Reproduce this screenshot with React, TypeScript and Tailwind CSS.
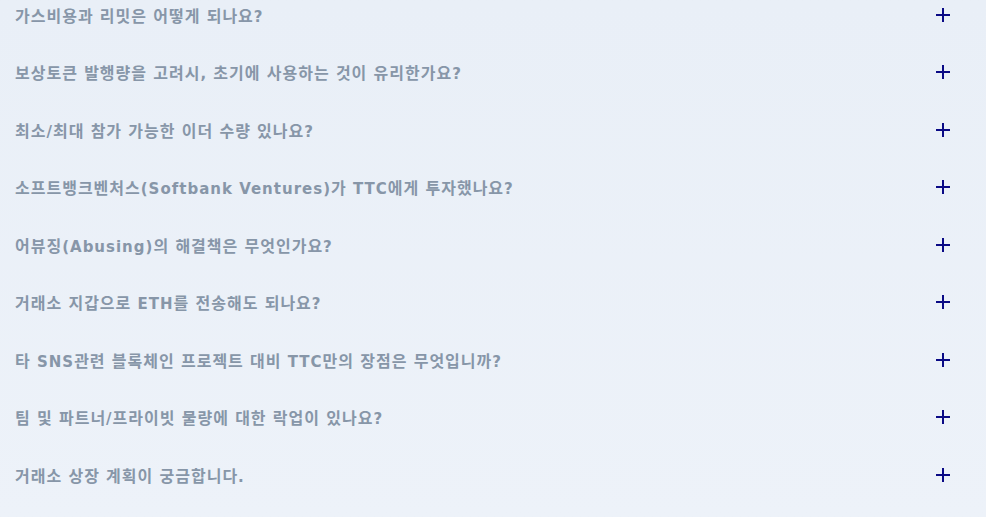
import React from "react";

const items = [
  "가스비용과 리밋은 어떻게 되나요?",
  "보상토큰 발행량을 고려시, 초기에 사용하는 것이 유리한가요?",
  "최소/최대 참가 가능한 이더 수량 있나요?",
  "소프트뱅크벤처스(Softbank Ventures)가 TTC에게 투자했나요?",
  "어뷰징(Abusing)의 해결책은 무엇인가요?",
  "거래소 지갑으로 ETH를 전송해도 되나요?",
  "타 SNS관련 블록체인 프로젝트 대비 TTC만의 장점은 무엇입니까?",
  "팀 및 파트너/프라이빗 물량에 대한 락업이 있나요?",
  "거래소 상장 계획이 궁금합니다.",
];

function Label({ text }: { text: string }) {
  const parts = text.split(/([\uAC00-\uD7A3]+)/);
  return (
    <span
      className="flex-1 text-[15px] leading-[20px] font-bold text-[#8796a8] tracking-[1px]"
      style={{ fontFamily: '"DejaVu Sans", "Noto Sans CJK KR", sans-serif' }}
    >
      {parts.map((p, i) =>
        /[\uAC00-\uD7A3]/.test(p) ? (
          <span key={i} className="text-[16px]">
            {p}
          </span>
        ) : (
          <span key={i}>{p}</span>
        )
      )}
    </span>
  );
}

export default function App() {
  return (
    <div className="w-[986px] h-[517px] overflow-hidden bg-gradient-to-b from-[#e9eff7] to-[#edf2f9]">
      <div className="-mt-[12px] flex flex-col">
        {items.map((t) => (
          <div key={t} className="h-[57.5px] flex items-center pl-[15px] pr-[36px]">
            <Label text={t} />
            <span className="relative w-[14px] h-[14px] -mt-[4px]">
              <span className="absolute left-0 top-[6px] w-[14px] h-[2px] bg-[#0a0a85]" />
              <span className="absolute left-[6px] top-0 w-[2px] h-[14px] bg-[#0a0a85]" />
            </span>
          </div>
        ))}
      </div>
    </div>
  );
}
